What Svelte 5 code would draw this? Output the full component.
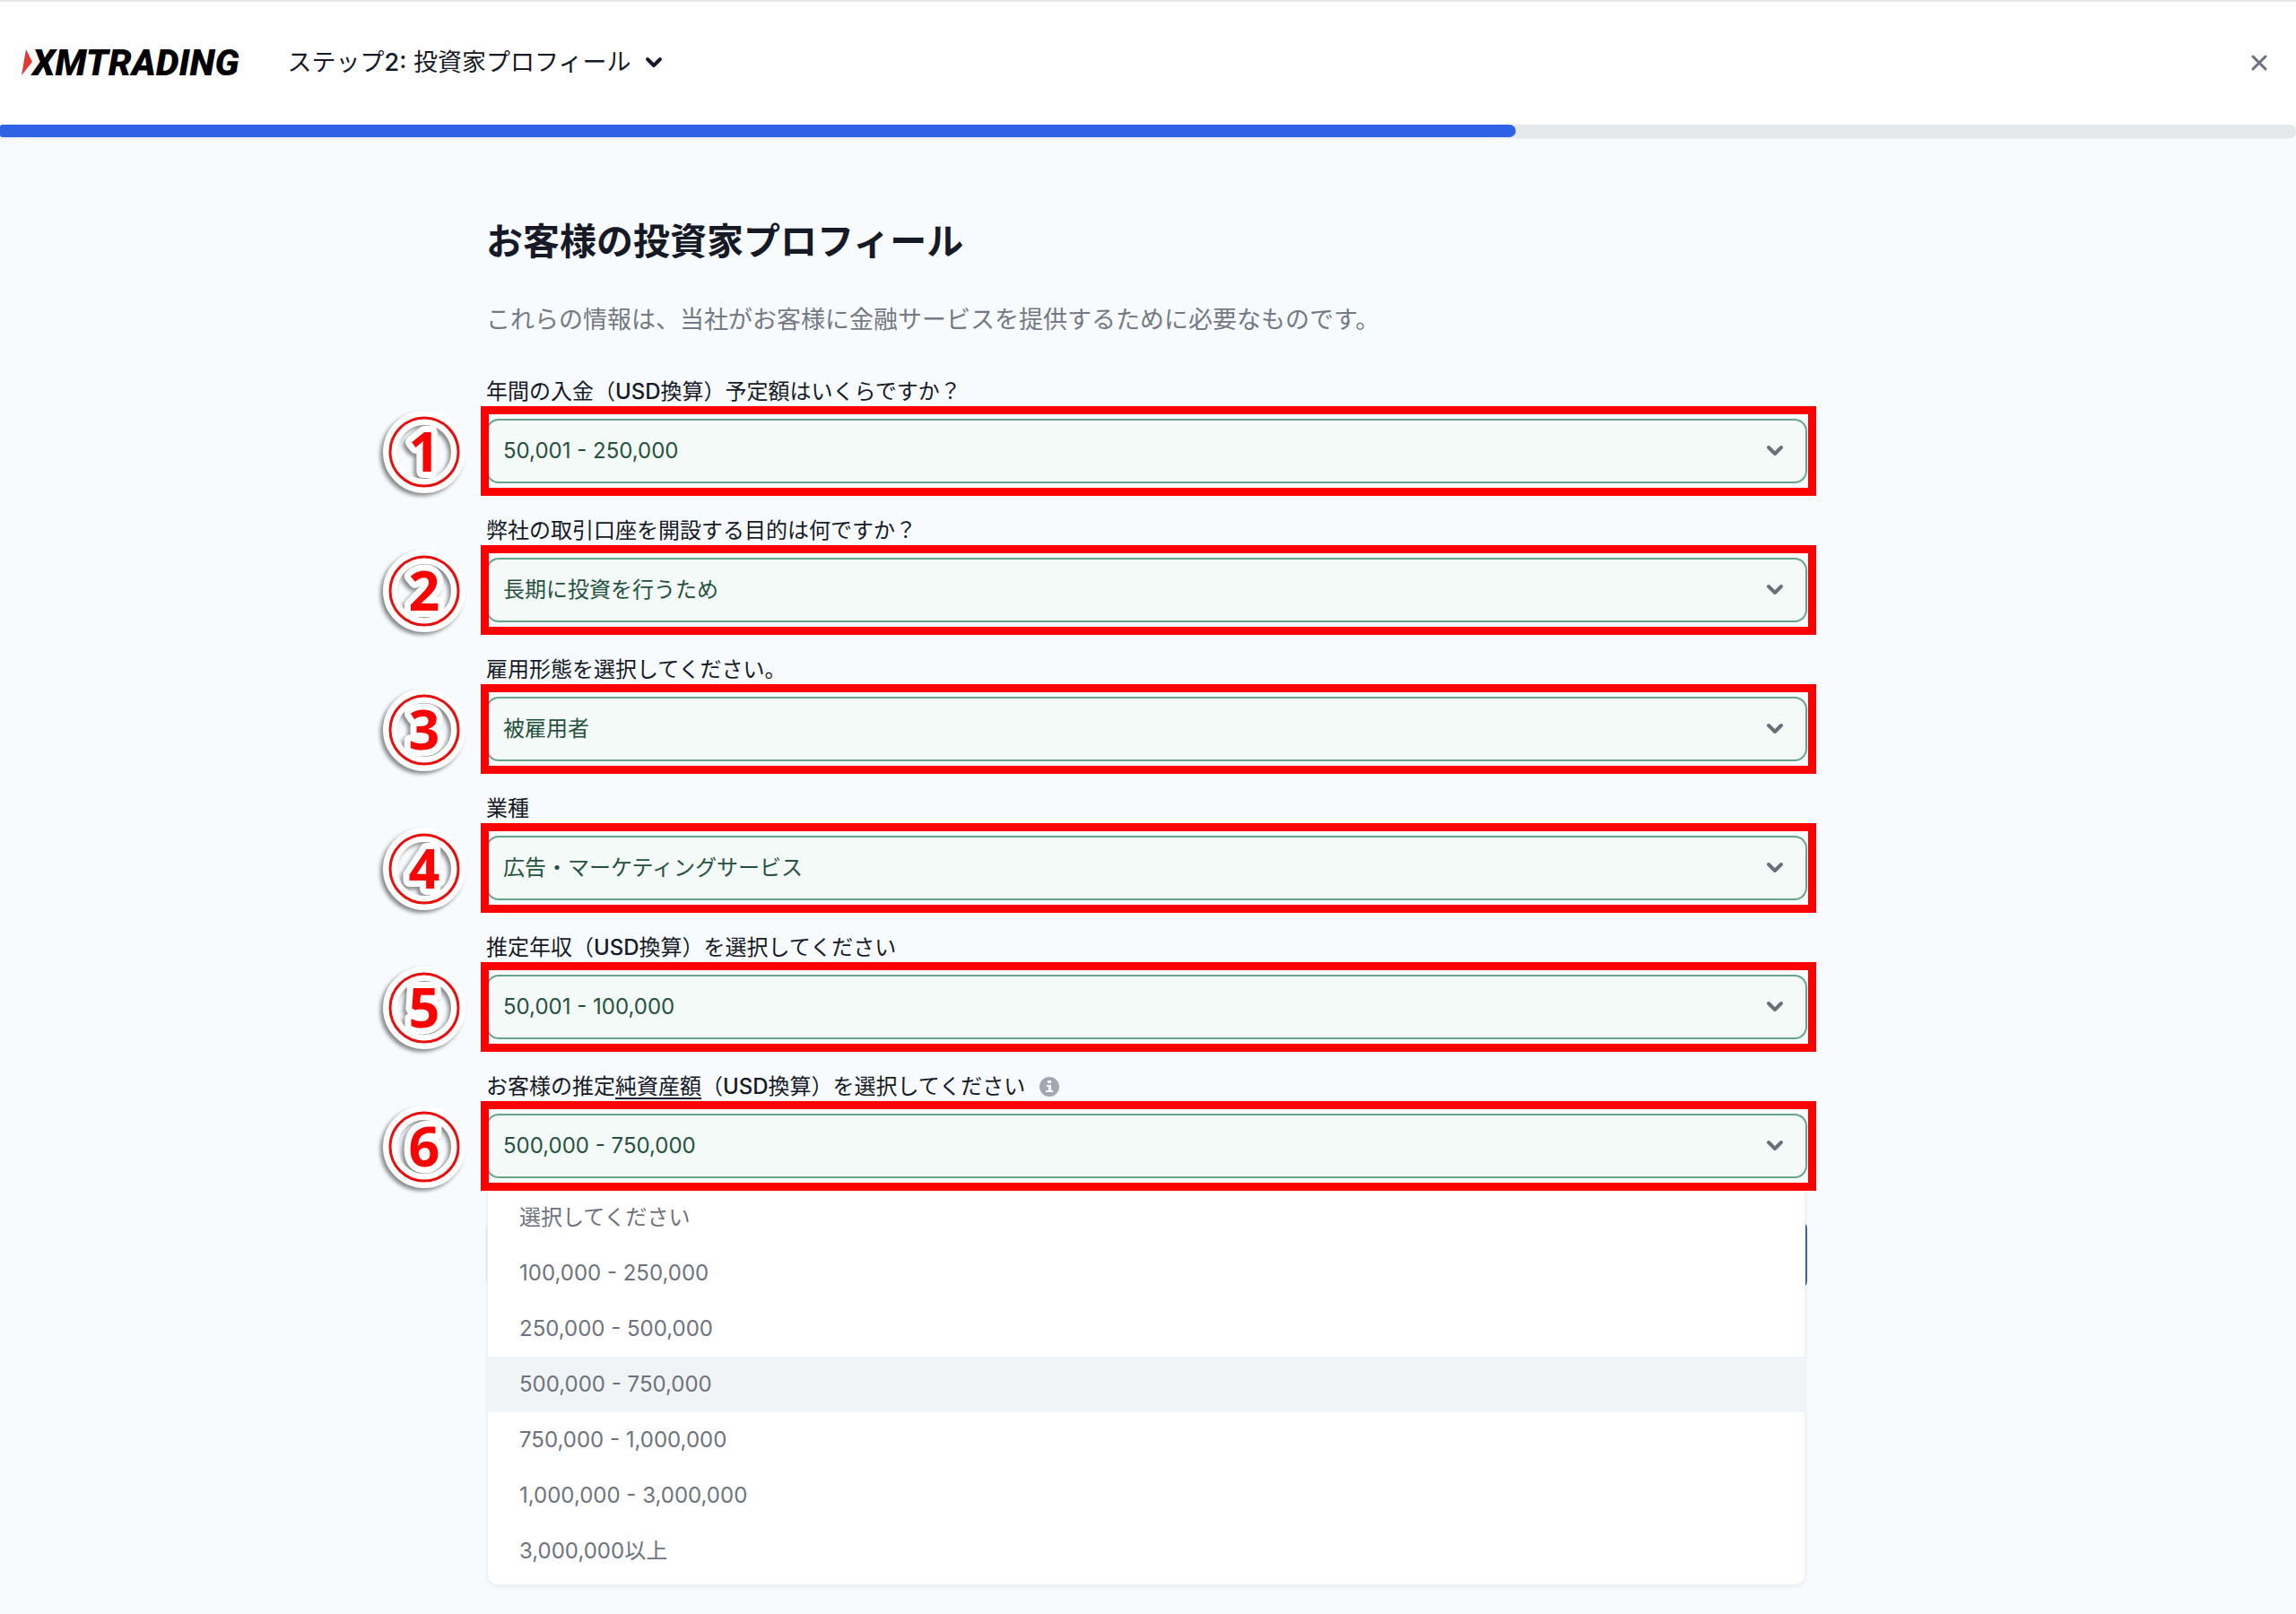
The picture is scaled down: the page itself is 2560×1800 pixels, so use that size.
<script lang="ts">
  // Step 2 of the registration flow: investor profile. Each field carries a numbered callout
  // (badge + frame) laid over it; the last field is shown with its option list open.
  interface Field {
    id: string;
    label: string;
    /** Underlined part of the label, followed by `rest`. */
    term?: string;
    rest?: string;
    value: string;
  }

  const fields: Field[] = [
    { id: "deposit", label: "年間の入金（USD換算）予定額はいくらですか？", value: "50,001 - 250,000" },
    { id: "purpose", label: "弊社の取引口座を開設する目的は何ですか？", value: "長期に投資を行うため" },
    { id: "employment", label: "雇用形態を選択してください。", value: "被雇用者" },
    { id: "industry", label: "業種", value: "広告・マーケティングサービス" },
    { id: "income", label: "推定年収（USD換算）を選択してください", value: "50,001 - 100,000" },
    { id: "worth", label: "お客様の推定", term: "純資産額", rest: "（USD換算）を選択してください", value: "500,000 - 750,000" },
  ];

  const options = [
    "選択してください",
    "100,000 - 250,000",
    "250,000 - 500,000",
    "500,000 - 750,000",
    "750,000 - 1,000,000",
    "1,000,000 - 3,000,000",
    "3,000,000以上",
  ];

  const progress = 66;
  let worth = $state("500,000 - 750,000");
</script>

{#snippet chevron()}
  <svg class="chevron" viewBox="0 0 20 14" aria-hidden="true"><path d="M3 3l7 7 7-7" /></svg>
{/snippet}

<!-- Latin runs are set a step heavier than the Japanese around them. -->
{#snippet mixed(text: string)}
  {#each text.split(/([A-Z0-9:]+)/) as part, n (n)}{#if n % 2}<b>{part}</b>{:else}{part}{/if}{/each}
{/snippet}

<header>
  <a class="logo" href="/">
    <svg viewBox="0 0 12 30" aria-hidden="true"><path d="M5 0l7 14L0 29z" /></svg>
    <span>XMTRADING</span>
  </a>
  <button type="button" class="step"><span>{@render mixed("ステップ2: 投資家プロフィール")}</span>{@render chevron()}</button>
  <button type="button" class="close" aria-label="閉じる">
    <svg viewBox="0 0 18 18" aria-hidden="true"><path d="M2 2l14 14M16 2L2 16" /></svg>
  </button>
</header>
<div class="track"><div class="bar" style={`width:${progress}%`}></div></div>

<div class="page">
  <main>
    <h1>お客様の投資家プロフィール</h1>
    <p class="lead">これらの情報は、当社がお客様に金融サービスを提供するために必要なものです。</p>

    <form>
      {#each fields as f, i (f.id)}
        <div class="field">
          <div class="caption">
            <label for={f.id}>{@render mixed(f.label)}{#if f.term}<u>{f.term}</u>{@render mixed(f.rest ?? "")}{/if}</label>
            {#if f.term}
              <svg class="info" viewBox="0 0 22 22" aria-hidden="true">
                <circle cx="11" cy="11" r="11" />
                <path d="M9 4h4v3H9zM8 9h5v6h2v2H7v-2h3v-4H8z" />
              </svg>
            {/if}
          </div>
          <div class="control">
            {#if f.id === "worth"}
              <select id={f.id} bind:value={worth}>
                {#each options as o (o)}<option value={o}>{o}</option>{/each}
              </select>
              {@render chevron()}
              <ul class="options">
                {#each options as o (o)}
                  <li><button type="button" class:selected={o === worth} onclick={() => (worth = o)}>{o}</button></li>
                {/each}
              </ul>
            {:else}
              <select id={f.id}><option>{f.value}</option></select>
              {@render chevron()}
            {/if}
            <span class="frame"></span>
            <svg class="badge" viewBox="0 0 110 110" aria-hidden="true">
              <g class="paper">
                <circle cx="55" cy="55" r="38" />
                <text x="55" y="77">{i + 1}</text>
              </g>
              <g class="ink">
                <circle cx="55" cy="55" r="38" />
                <text x="55" y="77">{i + 1}</text>
              </g>
            </svg>
          </div>
        </div>
      {/each}
      <div class="actions"><span></span><span class="primary"></span></div>
    </form>
  </main>
</div>

<style>
  :global(body) { background: #f7fbfe; }
  header, .page { font-family: Inter, "Noto Sans CJK JP", sans-serif; color: #161926; }
  button, select { font: inherit; color: inherit; cursor: pointer; }
  button { border: none; background: none; padding: 0; }
  b { font-weight: 500; }

  header {
    display: flex; align-items: center; box-sizing: border-box; height: 139px; padding: 0 32px 2px 24px;
    background: #fff; border-top: 2px solid #e5e5e5;
  }
  .logo { display: flex; align-items: center; color: #000; text-decoration: none; }
  .logo svg { width: 12px; height: 30px; fill: #e03a34; }
  .logo span { font-family: Roboto, sans-serif; font-size: 41px; font-weight: 900; font-style: italic; line-height: 48px; }
  .step { display: flex; align-items: center; gap: 16px; margin-left: 54px; font-size: 27px; line-height: 36px; }
  .close { display: flex; margin-left: auto; }
  .close svg { width: 18px; height: 18px; fill: none; stroke: #6b7080; stroke-width: 3; stroke-linecap: round; }
  .chevron { width: 20px; height: 14px; fill: none; stroke: currentColor; stroke-width: 4; stroke-linecap: round; stroke-linejoin: round; }

  .track { height: 14px; background: #e4e8ea; border-bottom: 2px solid #e9edf0; border-radius: 0 7px 7px 0; }
  .bar { height: 14px; background: #2f61e6; border-radius: 3px 7px 7px 3px; }

  /* The bottom padding leaves room for the open option list. */
  .page { padding: 0 3px 360px 0; }
  main { max-width: 1473px; margin: 0 auto; padding-top: 90px; }
  h1 { margin: 0 0 46px; font-size: 41px; font-weight: 700; line-height: 48px; }
  .lead { margin: 0 0 48px; font-size: 27px; line-height: 36px; color: #757985; }

  .field { margin-bottom: 39px; font-size: 24px; line-height: 28px; }
  .caption { display: flex; align-items: center; gap: 16px; height: 28px; margin-bottom: 16px; }
  u { text-underline-offset: 4px; text-decoration-thickness: 2px; }
  .info { width: 22px; height: 22px; fill: #a3a7b3; }
  .info path { fill: #fff; }

  .control { position: relative; display: grid; align-items: center; }
  .control > select, .control > .chevron { grid-area: 1 / 1; }
  .control > .chevron { justify-self: end; margin-right: 26px; color: #696e7b; pointer-events: none; }
  select {
    appearance: none; width: 100%; height: 72px; padding: 0 64px 0 17px;
    color: #24523f; background: #f4faf8; border: 2px solid #67a58a; border-radius: 14px;
  }

  /* Callouts sit over the form. */
  .frame { position: absolute; inset: -14px -10px -14px -6px; z-index: 2; border: 9px solid #fe0000; pointer-events: none; }
  .badge { position: absolute; left: -124px; top: -18px; z-index: 2; width: 110px; height: 110px; }
  .badge text { font-family: "Noto Sans", "Open Sans", sans-serif; font-size: 61px; font-weight: 700; text-anchor: middle; }
  .paper { filter: drop-shadow(-3px 3px 2px rgba(0, 0, 0, 0.45)); }
  .paper circle { fill: none; stroke: #fff; stroke-width: 16; }
  .paper text { fill: #fff; stroke: #fff; stroke-width: 14; stroke-linejoin: round; }
  .ink circle { fill: none; stroke: #e8100f; stroke-width: 3; }
  .ink text { fill: #fe0000; }

  .options {
    position: absolute; top: 78px; left: 1px; right: 2px; z-index: 1; margin: 0; padding: 6px 0; list-style: none;
    background: #fff; border: 1px solid #eff2f4; border-radius: 12px; box-shadow: 0 2px 4px rgba(0, 0, 0, 0.06);
  }
  .options button { display: block; width: 100%; height: 62px; padding: 0 35px; text-align: left; color: #6e727d; }
  .options .selected { background: #f0f4f6; }

  .actions { display: flex; justify-content: space-between; gap: 24px; margin-top: 48px; }
  .actions span { flex: 1; box-sizing: border-box; height: 75px; background: #fff; border: 2px solid #e3e6ea; border-radius: 8px; }
  .actions .primary { background: #2f5fd0; border-color: #3f62b0; }
</style>
